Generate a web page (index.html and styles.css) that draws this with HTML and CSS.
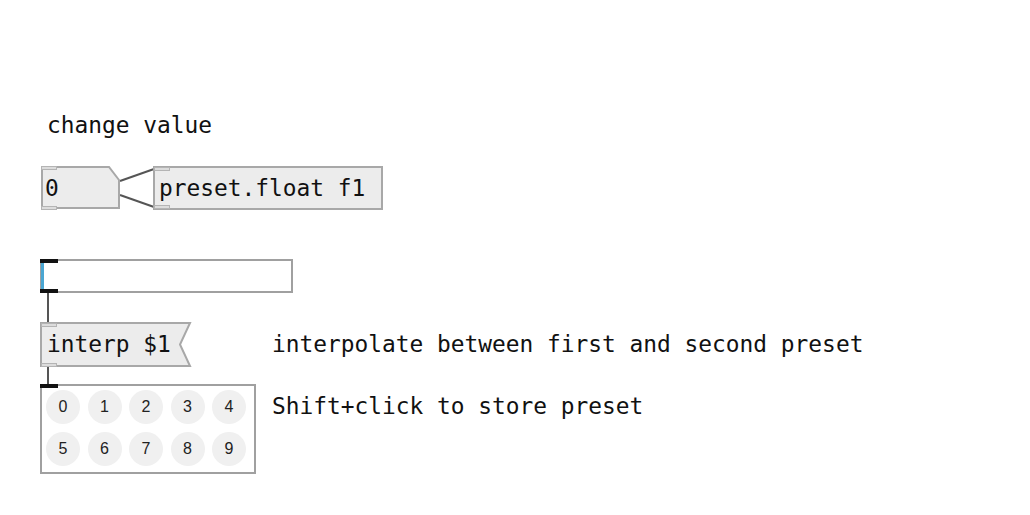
FILE: index.html
```html
<!DOCTYPE html>
<html>
<head>
<meta charset="utf-8">
<link rel="stylesheet" href="styles.css">
</head>
<body>
<div class="canvas">
  <svg class="wires" width="1030" height="515" viewBox="0 0 1030 515">
    <line x1="120" y1="181" x2="154" y2="169"/>
    <line x1="120" y1="195" x2="154" y2="207"/>
    <line x1="48" y1="292" x2="48" y2="323"/>
    <line x1="48" y1="367" x2="48" y2="386"/>
  </svg>

  <div class="comment c-change">change value</div>

  <div class="node numbox">
    <svg class="shape" width="80" height="44" viewBox="0 0 80 44">
      <polygon points="1,1 68,1 78,14 78,42 1,42"/>
    </svg>
    <span class="inlet gray"></span><span class="outlet gray"></span>
    <span class="label">0</span>
  </div>

  <div class="node objbox">
    <span class="inlet gray"></span><span class="outlet gray"></span>
    <span class="label">preset.float f1</span>
  </div>

  <div class="node slider">
    <span class="knob"></span>
    <span class="inlet black"></span><span class="outlet black"></span>
  </div>

  <div class="node msgbox">
    <svg class="shape" width="152" height="46" viewBox="0 0 152 46">
      <polygon points="1,1 150,1 140,22.5 150,44 1,44"/>
    </svg>
    <span class="inlet gray"></span><span class="outlet gray"></span>
    <span class="label">interp $1</span>
  </div>

  <div class="comment c-interp">interpolate between first and second preset</div>
  <div class="comment c-shift">Shift+click to store preset</div>

  <div class="node preset">
    <span class="inlet black"></span>
    <div class="grid">
      <span class="dot">0</span><span class="dot">1</span><span class="dot">2</span><span class="dot">3</span><span class="dot">4</span>
      <span class="dot">5</span><span class="dot">6</span><span class="dot">7</span><span class="dot">8</span><span class="dot">9</span>
    </div>
  </div>
</div>
</body>
</html>
```

FILE: styles.css
```css
html, body {
  margin: 0;
  padding: 0;
  background: #ffffff;
}

.canvas {
  position: relative;
  width: 1030px;
  height: 515px;
  overflow: hidden;
  font-family: "DejaVu Sans Mono", "Liberation Mono", monospace;
  font-size: 22.85px;
  color: #111;
}

.wires {
  position: absolute;
  left: 0;
  top: 0;
  pointer-events: none;
}

.wires line {
  stroke: #555;
  stroke-width: 2;
}

.comment {
  position: absolute;
  white-space: pre;
  line-height: 26px;
}

.c-change { left: 47px; top: 112px; }
.c-interp { left: 272px; top: 331px; }
.c-shift { left: 272px; top: 393px; }

.node {
  position: absolute;
  box-sizing: border-box;
}

.shape {
  position: absolute;
  left: 0;
  top: 0;
}

.shape polygon {
  fill: #ececec;
  stroke: #a8a8a8;
  stroke-width: 2;
}

.label {
  position: relative;
  display: block;
  white-space: pre;
  line-height: 26px;
}

.inlet, .outlet {
  position: absolute;
  left: 0;
  width: 16px;
  height: 4px;
  box-sizing: border-box;
  z-index: 2;
}

.inlet { top: 0; }
.outlet { bottom: 0; }

.inlet.gray, .outlet.gray {
  background: #dcdcdc;
  border: 1px solid #b4b4b4;
}

.inlet.black, .outlet.black {
  background: #111;
  height: 4px;
}

.numbox {
  left: 41px;
  top: 166px;
  width: 80px;
  height: 44px;
}

.numbox .label {
  padding: 9px 0 0 4px;
}

.objbox {
  left: 153px;
  top: 166px;
  width: 230px;
  height: 44px;
  background: #ececec;
  border: 2px solid #a8a8a8;
}

.objbox .inlet, .objbox .outlet { left: -1px; }
.objbox .inlet { top: -1px; }
.objbox .outlet { bottom: -1px; }

.objbox .label {
  padding: 7px 0 0 4px;
}

.slider {
  left: 40px;
  top: 259px;
  width: 253px;
  height: 34px;
  border: 2px solid #a0a0a0;
  background: #fff;
}

.slider .knob {
  position: absolute;
  left: -1px;
  top: 0;
  bottom: 0;
  width: 3px;
  background: #4aa6d2;
}

.slider .inlet, .slider .outlet { left: -2px; width: 18px; }
.slider .inlet { top: -2px; }
.slider .outlet { bottom: -2px; }

.msgbox {
  left: 40px;
  top: 322px;
  width: 152px;
  height: 46px;
}

.msgbox .label {
  padding: 9px 0 0 7px;
}

.msgbox .inlet { left: 1px; top: 1px; }
.msgbox .outlet { left: 1px; bottom: 1px; }

.preset {
  left: 40px;
  top: 384px;
  width: 216px;
  height: 90px;
  border: 2px solid #a0a0a0;
  background: #fff;
}

.preset .inlet { left: -2px; top: -2px; width: 18px; }

.grid {
  display: grid;
  grid-template-columns: repeat(5, 34px);
  grid-auto-rows: 34px;
  column-gap: 7.5px;
  row-gap: 8px;
  padding: 4px 0 0 4px;
}

.dot {
  display: flex;
  align-items: center;
  justify-content: center;
  border-radius: 50%;
  background: #f0f0f0;
  font-family: "Liberation Sans", Arial, sans-serif;
  font-size: 16px;
  color: #222;
}
```
